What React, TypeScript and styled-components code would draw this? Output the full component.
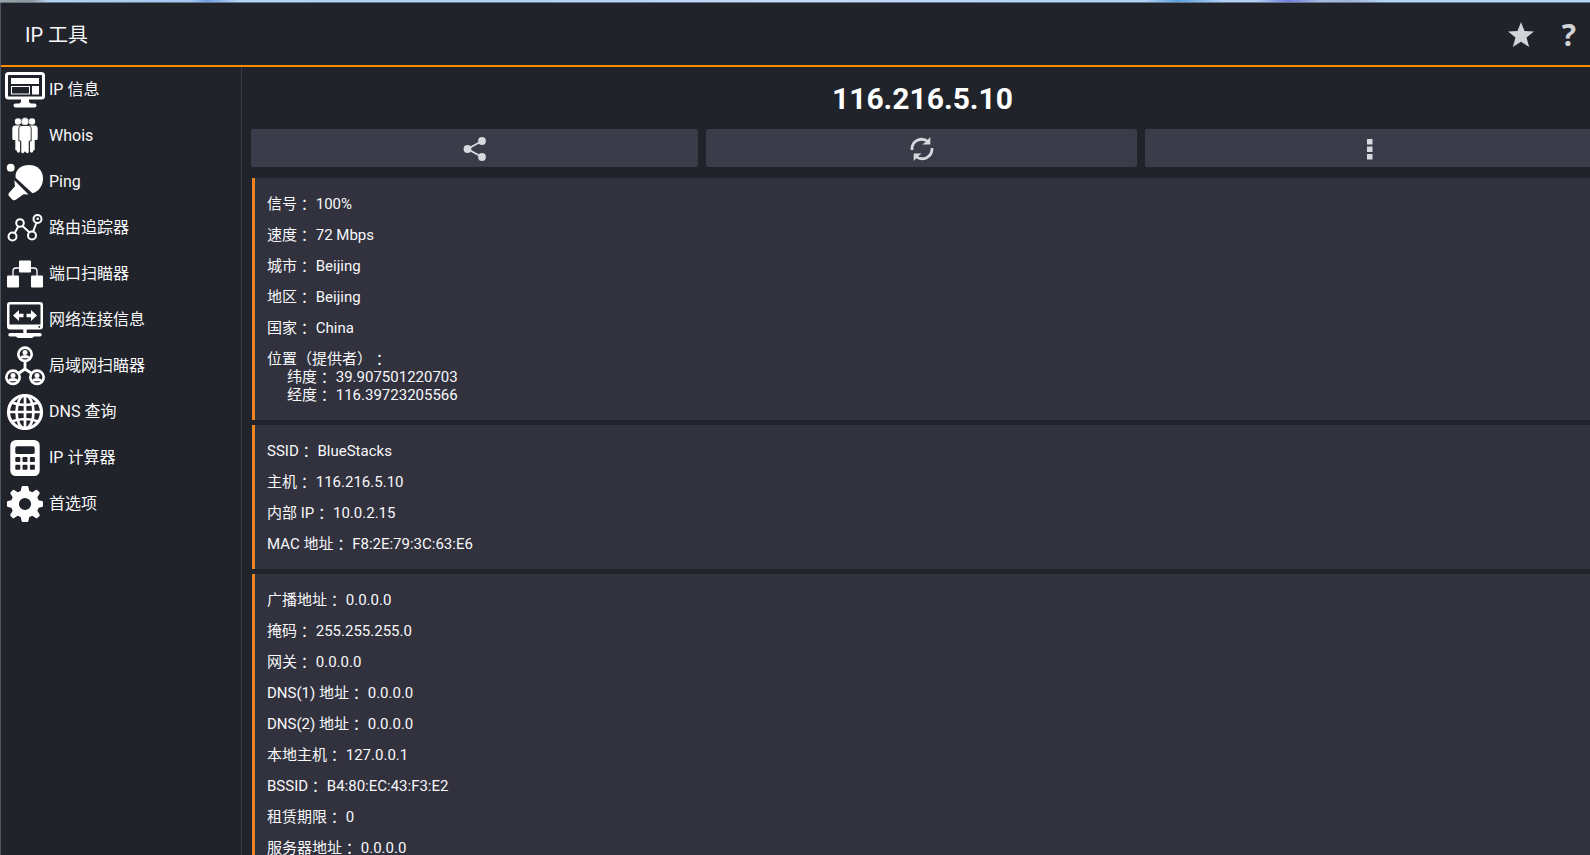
import React from "react";
import styled, { createGlobalStyle } from "styled-components";

const GlobalStyle = createGlobalStyle`
  * { box-sizing: border-box; }
  body {
    margin: 0;
    background: #20232a;
    color: #f8f8fa;
    font-family: Roboto, "Noto Sans CJK SC", sans-serif;
  }
`;

const Window = styled.div`
  display: flex;
  flex-direction: column;
  height: 100vh;
  overflow: hidden;
`;

const DesktopEdge = styled.div`
  flex: none;
  height: 3px;
  border-bottom: 1px solid #66768a;
  background: linear-gradient(
    90deg,
    #9aa3a6 0%, #8d989c 2%, #b4d2f2 3%, #a4c8f0 12%, #6f9fe2 13%, #b6d4f6 15%,
    #b0d0f4 30%, #c4dcf8 50%, #b0d2f6 72%, #5aa0e0 74%, #b4d0f4 77%, #b4d0f4 79%,
    #6f80dc 81%, #aab8e0 83%, #9fb4d8 85%, #b4d4f6 87%, #b4d4f6 100%
  );
`;

const Frame = styled.div`
  flex: 1;
  min-height: 0;
  display: flex;
  flex-direction: column;
  border-left: 1px solid #4a5866;
`;

const Header = styled.header`
  flex: none;
  display: flex;
  align-items: center;
  justify-content: space-between;
  height: 64px;
  padding: 2px 0 0 24px;
  border-bottom: 2px solid #ff8a00;
`;

const Title = styled.h1`
  margin: 0;
  font-size: 20px;
  line-height: 28px;
  font-weight: 400;
`;

const HeaderActions = styled.div`
  display: flex;
  gap: 6px;
`;

const HeaderButton = styled.button`
  display: flex;
  align-items: center;
  justify-content: center;
  width: 42px;
  height: 48px;
  padding: 0;
  border: 0;
  background: none;
  color: #d2d3d6;
  font: 700 30px/36px "Open Sans", sans-serif;
`;

const Body = styled.div`
  flex: 1;
  min-height: 0;
  display: flex;
`;

const Sidebar = styled.nav`
  flex: none;
  width: 241px;
  border-right: 1px solid #33404c;
`;

const MenuList = styled.ul`
  margin: 0;
  padding: 0;
  list-style: none;
`;

const MenuLink = styled.a`
  display: flex;
  align-items: center;
  gap: 4px;
  height: 46px;
  padding-left: 4px;
  color: inherit;
  font-size: 16px;
  line-height: 24px;
  text-decoration: none;
`;

const MenuIcon = styled.svg`
  flex: none;
  width: 40px;
  height: 40px;
  color: #fff;
`;

const Main = styled.main`
  flex: 1;
  min-width: 0;
  margin-right: -4px;
  padding-left: 9px;
`;

const Address = styled.h2`
  margin: 0;
  padding: 14px 0 12px;
  color: #fff;
  font-size: 30px;
  line-height: 36px;
  font-weight: 700;
  text-align: center;
`;

const Toolbar = styled.div`
  display: grid;
  grid-template-columns: 447fr 431fr 449fr;
  gap: 8px;
  margin-bottom: 11px;
`;

const ToolButton = styled.button`
  display: flex;
  align-items: center;
  justify-content: center;
  height: 38px;
  padding: 2px 0 0;
  border: 0;
  border-radius: 2px;
  background: #3b3c49;
  color: #d8d9de;
`;

const Cards = styled.div`
  display: flex;
  flex-direction: column;
  gap: 5px;
  padding-left: 1px;
`;

const Card = styled.section`
  display: flex;
  flex-direction: column;
  gap: 13px;
  padding: 17px 12px 16px;
  border-left: 3px solid #ee8420;
  background: #31323e;
  font-size: 15px;
  line-height: 18px;
`;

const Line = styled.div<{ $indent?: boolean }>`
  height: 18px;
  padding-left: ${(p) => (p.$indent ? "20px" : "0")};
  white-space: pre;
`;

const Mark = styled.span<{ $colon?: boolean }>`
  font-family: "Noto Sans CJK TC", sans-serif;
  line-height: 0;
  vertical-align: ${(p) => (p.$colon ? "-1px" : "baseline")};
  text-spacing-trim: space-all;
`;

const icons = {
  monitor: (
    <>
      <rect x="1.5" y="3.5" width="37" height="24.5" rx="2" fill="none" stroke="currentColor" strokeWidth="3" />
      <path d="M6 8h28v6H6zM27 16h7v8.500h-7z" />
      <rect x="6.500" y="16.500" width="18" height="7.500" fill="none" stroke="currentColor" />
      <path d="M16 29h8v3l2 2H14l2-2z" />
      <rect x="8.500" y="33.500" width="23" height="4" rx="2" />
    </>
  ),
  people: (
    <>
      <circle cx="13" cy="5.500" r="3.200" />
      <circle cx="27" cy="5.500" r="3.200" />
      <path d="M10 9.500h6V25l-1 1v8.500c0 3-3 3-3.300 0L10.300 34V24H8.800c-1 0-1.500-.6-1.500-1.500V13c0-2 1-3.500 2.700-3.500zM30 9.500h-6V25l1 1v8.500c0 3 3 3 3.300 0l1.400-.5V24h1.500c1 0 1.500-.6 1.500-1.500V13c0-2-1-3.500-2.700-3.500z" />
      <circle cx="20" cy="5.500" r="3.900" stroke="#20232a" strokeWidth=".5" />
      <path d="M17 9.500h6c2 0 3.200 1 3.200 3V25h-2v10.500c0 2.700-3.500 2.700-3.700.5h-1c-.2 2.200-3.700 2.200-3.700-.5V25h-2V12.500c0-2 1.200-3 3.200-3z" stroke="#20232a" strokeWidth=".9" />
    </>
  ),
  paddle: (
    <>
      <circle cx="5.700" cy="5.700" r="3.900" />
      <path d="M10.600 15.700C9.600 9 15 3 24 3c9 0 14 6 14 13.500 0 7.500-4.500 13.200-10.500 14.800z" />
      <path d="M9.300 18.300 23.500 32.500l-5-.3-7 5c-1.500 1.500-3 1.500-4.300.2L4 34c-1-1.200-.8-2.200.2-3.300l5.800-6.500z" />
    </>
  ),
  route: (
    <g fill="none" stroke="currentColor" strokeWidth="2">
      <path d="M9.500 25.500 13.200 18.500M17.500 18l7 6.500M28 24l3.500-9.500" />
      <circle cx="7.500" cy="28.500" r="4" />
      <circle cx="15" cy="15" r="3.800" />
      <circle cx="27" cy="27.500" r="4" />
      <circle cx="32.500" cy="11" r="4" />
      <circle cx="32.700" cy="10.700" r=".7" strokeWidth="1.200" />
    </g>
  ),
  ports: (
    <>
      <rect x="14" y="6.500" width="12" height="12" rx="1" />
      <rect x="2" y="21.500" width="12" height="12" rx="1" />
      <rect x="26" y="21.500" width="12" height="12" rx="1" />
      <path d="M14 14h-3c-2 0-3 1-3 3v5M26 14h3c2 0 3 1 3 3v5" fill="none" stroke="currentColor" strokeWidth="1.300" />
    </>
  ),
  connection: (
    <>
      <path fillRule="evenodd" d="M5 2h30a3 3 0 0 1 3 3v21.500a3 3 0 0 1-3 3H5a3 3 0 0 1-3-3V5a3 3 0 0 1 3-3zm.5 2.500c-.6 0-1 .4-1 1V24.500h31v-19c0-.6-.4-1-1-1zM34.300 25.900a.9.900 0 1 0 .01 0z" />
      <path d="M8 15.500 14 10v3.800h4.500v3.400H14V21zM32 15.500 26 10v3.800h-4.500v3.400H26V21z" />
      <path d="M18.300 29h3.400v4H35a1.500 1.500 0 0 1 0 3.500h-6c-1 1.200-2 1.500-3 1.500H14c-1 0-2-.3-3-1.500H5A1.500 1.500 0 0 1 5 33h13.300z" />
    </>
  ),
  lan: (
    <>
      <path d="M20 14v9M20 23l-9 6M20 23l9 6" fill="none" stroke="currentColor" strokeWidth="2.800" />
      {[[20, 8.3], [8, 31.3], [32, 31.3]].map(([x, y]) => (
        <g key={x} transform={`translate(${x} ${y})`}>
          <circle r="8" />
          <circle r="5.300" fill="#20232a" />
          <circle cy="-1.700" r="2.500" />
          <path d="M-4.400 4V2.600Q-3.800.8 0 .8t4.400 1.800V4z" />
        </g>
      ))}
    </>
  ),
  globe: (
    <g fill="none" stroke="currentColor" strokeWidth="2.700">
      <circle cx="20" cy="20" r="16.500" strokeWidth="3.200" />
      <ellipse cx="20" cy="20" rx="8.500" ry="16.500" />
      <path d="M20 3v34M3 20h34M6.500 10.500Q20 15.500 33.500 10.500M6.500 29.500Q20 24.500 33.500 29.500" />
    </g>
  ),
  calculator: (
    <>
      <rect x="5.300" y="2" width="29.400" height="36" rx="5.500" />
      <g fill="#20232a">
        <rect x="10.300" y="8.300" width="19.400" height="7.700" rx="1.800" />
        {[19, 26.7].map((y) =>
          [10.3, 17.5, 24.9].map((x) => <rect key={`${x}-${y}`} x={x} y={y} width="5" height="5" rx="1" />)
        )}
      </g>
    </>
  ),
  gear: (
    <path
      fillRule="evenodd"
      d="M17.800 2h4.400q1 0 1.200 1l.9 3.900 3 1.300 3.500-2.200q.9-.5 1.600.2l2 2q.6.700.1 1.500l-2.200 3.600 1.300 3 3.500.8q.9.200.9 1.100v3.600q0 .9-.9 1.100l-3.500.9-1.300 3 2.200 3.500q.5.900-.1 1.600l-2 2q-.7.600-1.600.1l-3.500-2.200-3 1.300-.9 3.900q-.2 1-1.200 1h-4.400q-1 0-1.200-1l-.9-3.900-3-1.300-3.500 2.200q-.9.500-1.600-.1l-2-2q-.6-.7-.1-1.600l2.200-3.500-1.300-3-3.500-.9q-.9-.2-.9-1.100v-3.600q0-.9.900-1.100l3.500-.8 1.300-3-2.200-3.600q-.5-.8.1-1.500l2-2q.7-.7 1.600-.2l3.500 2.200 3-1.300.9-3.900q.2-1 1.200-1zM20 13.900a6.100 6.100 0 1 0 0 12.200 6.100 6.100 0 0 0 0-12.200z"
    />
  ),
};

const menu: { icon: keyof typeof icons; label: string }[] = [
  { icon: "monitor", label: "IP 信息" },
  { icon: "people", label: "Whois" },
  { icon: "paddle", label: "Ping" },
  { icon: "route", label: "路由追踪器" },
  { icon: "ports", label: "端口扫瞄器" },
  { icon: "connection", label: "网络连接信息" },
  { icon: "lan", label: "局域网扫瞄器" },
  { icon: "globe", label: "DNS 查询" },
  { icon: "calculator", label: "IP 计算器" },
  { icon: "gear", label: "首选项" },
];

type Entry = { text: string; details?: string[] };

const cards: Entry[][] = [
  [
    { text: "信号： 100%" },
    { text: "速度： 72 Mbps" },
    { text: "城市： Beijing" },
    { text: "地区： Beijing" },
    { text: "国家： China" },
    { text: "位置（提供者）：", details: ["纬度： 39.907501220703", "经度： 116.39723205566"] },
  ],
  [
    { text: "SSID： BlueStacks" },
    { text: "主机： 116.216.5.10" },
    { text: "内部 IP： 10.0.2.15" },
    { text: "MAC 地址： F8:2E:79:3C:63:E6" },
  ],
  [
    { text: "广播地址： 0.0.0.0" },
    { text: "掩码： 255.255.255.0" },
    { text: "网关： 0.0.0.0" },
    { text: "DNS(1) 地址： 0.0.0.0" },
    { text: "DNS(2) 地址： 0.0.0.0" },
    { text: "本地主机： 127.0.0.1" },
    { text: "BSSID： B4:80:EC:43:F3:E2" },
    { text: "租赁期限： 0" },
    { text: "服务器地址： 0.0.0.0" },
  ],
];

// Full-width punctuation is set in the face that centres it in its cell.
const withMarks = (text: string) =>
  text.split(/([（）：])/).map((part, i) =>
    i % 2 ? (
      <Mark key={i} $colon={part === "："}>
        {part}
      </Mark>
    ) : (
      part
    )
  );

export default function App() {
  return (
    <Window>
      <GlobalStyle />
      <DesktopEdge />
      <Frame>
        <Header>
          <Title>IP 工具</Title>
          <HeaderActions>
            <HeaderButton aria-label="收藏">
              <svg width="26" height="26" viewBox="0 0 26 26" fill="currentColor">
                <path d="M13 0 16.500 9 26 9.500 18.500 15.600 21.200 25 13 19.800 4.800 25 7.500 15.600 0 9.500 9.500 9z" />
              </svg>
            </HeaderButton>
            <HeaderButton>?</HeaderButton>
          </HeaderActions>
        </Header>
        <Body>
          <Sidebar>
            <MenuList>
              {menu.map(({ icon, label }) => (
                <li key={label}>
                  <MenuLink href="#">
                    <MenuIcon viewBox="0 0 40 40" fill="currentColor" aria-hidden="true">
                      {icons[icon]}
                    </MenuIcon>
                    {label}
                  </MenuLink>
                </li>
              ))}
            </MenuList>
          </Sidebar>
          <Main>
            <Address>116.216.5.10</Address>
            <Toolbar>
              <ToolButton aria-label="分享">
                <svg width="24" height="24" viewBox="0 0 24 24" fill="currentColor">
                  <path d="M19 4 4.500 12 19 20" fill="none" stroke="currentColor" strokeWidth="1.800" />
                  <circle cx="19" cy="4" r="3.900" />
                  <circle cx="4.500" cy="12" r="3.900" />
                  <circle cx="19" cy="20" r="3.900" />
                </svg>
              </ToolButton>
              <ToolButton aria-label="刷新">
                <svg width="24" height="24" viewBox="0 0 24 24" fill="currentColor">
                  <path d="M2 13C1.500 3.500 11.500-.5 18 4.500M22 11c.5 9.500-9.500 13.500-16 8.500" fill="none" stroke="currentColor" strokeWidth="2.800" />
                  <path d="M20.300 0v7.500h-8l3-2.300zM3.700 24v-7.500h8l-3 2.300z" />
                </svg>
              </ToolButton>
              <ToolButton aria-label="更多">
                <svg width="6" height="22" viewBox="0 0 6 22" fill="currentColor">
                  <path d="M0 1h5.500v5.500H0zM0 8.500h5.500V14H0zM0 16h5.500v5.500H0z" />
                </svg>
              </ToolButton>
            </Toolbar>
            <Cards>
              {cards.map((entries, i) => (
                <Card key={i}>
                  {entries.map(({ text, details }) => (
                    <div key={text}>
                      <Line>{withMarks(text)}</Line>
                      {details?.map((detail) => (
                        <Line key={detail} $indent>
                          {withMarks(detail)}
                        </Line>
                      ))}
                    </div>
                  ))}
                </Card>
              ))}
            </Cards>
          </Main>
        </Body>
      </Frame>
    </Window>
  );
}
